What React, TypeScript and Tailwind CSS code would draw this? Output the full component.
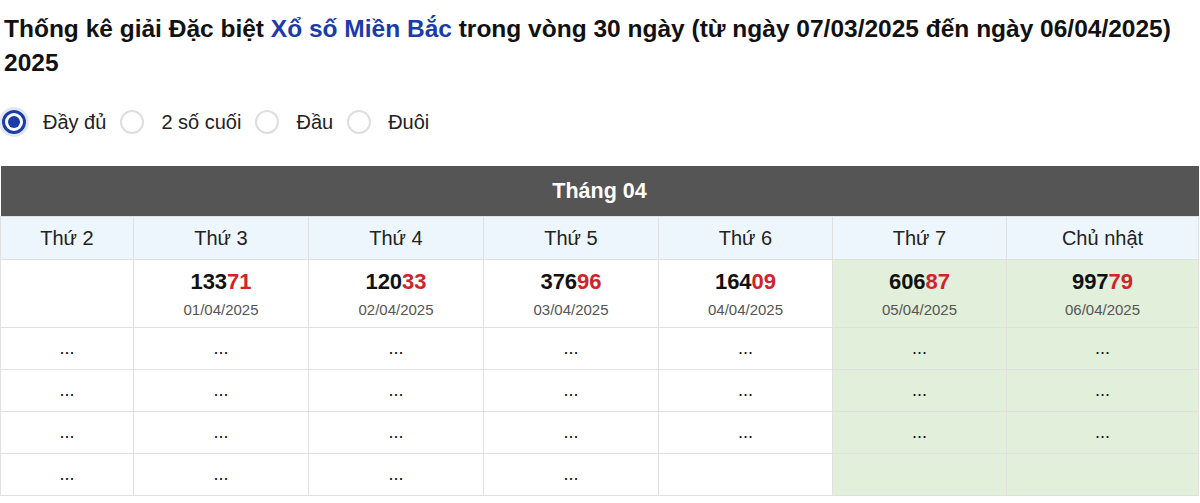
import { useState } from 'react';

const days = ['Thứ 2', 'Thứ 3', 'Thứ 4', 'Thứ 5', 'Thứ 6', 'Thứ 7', 'Chủ nhật'];
const widths = ['w-[133px]', 'w-[175px]', 'w-[175px]', 'w-[175px]', 'w-[174px]', 'w-[174px]', 'w-[192px]'];

const firstRow: ({ num: string; date: string } | null)[] = [
  null,
  { num: '13371', date: '01/04/2025' },
  { num: '12033', date: '02/04/2025' },
  { num: '37696', date: '03/04/2025' },
  { num: '16409', date: '04/04/2025' },
  { num: '60687', date: '05/04/2025' },
  { num: '99779', date: '06/04/2025' },
];

// how many cells in each "..." row carry a placeholder
const dotRows = [7, 7, 7, 4];

const options = ['Đầy đủ', '2 số cuối', 'Đầu', 'Đuôi'];

export default function App() {
  const [mode, setMode] = useState(0);

  const cellBg = (i: number) => (i >= 5 ? 'bg-[#e1efdb]' : 'bg-white');

  return (
    <div className="font-['Liberation_Sans',Arial,sans-serif] text-[#111] bg-white min-h-screen">
      <h1 className="pt-[12px] pl-[4px] text-[24.5px] leading-[34px] font-bold">
        Thống kê giải Đặc biệt <span className="text-[#1a3ca8]">Xổ số Miền Bắc</span> trong vòng 30 ngày (từ ngày
        07/03/2025 đến ngày 06/04/2025) 2025
      </h1>

      <div className="flex items-center mt-[29px] h-[26px] pl-[2px]">
        {options.map((opt, i) => (
          <label key={opt} className="flex items-center cursor-pointer mr-[14px]" onClick={() => setMode(i)}>
            <span
              className={`flex items-center justify-center w-[24px] h-[24px] rounded-full ${
                mode === i
                  ? 'border-[3px] border-[#1a3ca8] shadow-[0_0_0_3px_rgba(26,60,168,0.12)]'
                  : 'border-2 border-[#dedede]'
              }`}
            >
              {mode === i && <span className="w-[12px] h-[12px] rounded-full bg-[#1a3ca8]" />}
            </span>
            <span className="ml-[17px] text-[20px] text-[#222]">{opt}</span>
          </label>
        ))}
      </div>

      <table className="mt-[31px] w-[1198px] table-fixed border-collapse text-center">
        <colgroup>
          {widths.map((w, i) => (
            <col key={i} className={w} />
          ))}
        </colgroup>
        <thead>
          <tr>
            <th colSpan={7} className="h-[50px] bg-[#555555] text-white text-[21.5px] font-bold">
              Tháng 04
            </th>
          </tr>
          <tr>
            {days.map((d) => (
              <th key={d} className="h-[43px] bg-[#eef6fd] border border-[#e0e0e0] text-[20px] font-normal text-[#222]">
                {d}
              </th>
            ))}
          </tr>
        </thead>
        <tbody>
          <tr>
            {firstRow.map((c, i) => (
              <td key={i} className={`h-[68px] border border-[#e0e0e0] ${cellBg(i)}`}>
                {c && (
                  <div className="flex flex-col items-center pt-[2px]">
                    <span className="text-[22px] font-bold leading-[26px] text-[#111]">
                      {c.num.slice(0, 3)}
                      <span className="text-[#d0232b]">{c.num.slice(3)}</span>
                    </span>
                    <span className="mt-[6px] text-[15px] leading-[18px] text-[#555]">{c.date}</span>
                  </div>
                )}
              </td>
            ))}
          </tr>
          {dotRows.map((n, r) => (
            <tr key={r}>
              {days.map((_, i) => (
                <td key={i} className={`h-[42px] border border-[#e0e0e0] text-[18px] text-[#111] ${cellBg(i)}`}>
                  {i < n ? '...' : ''}
                </td>
              ))}
            </tr>
          ))}
        </tbody>
      </table>
    </div>
  );
}
